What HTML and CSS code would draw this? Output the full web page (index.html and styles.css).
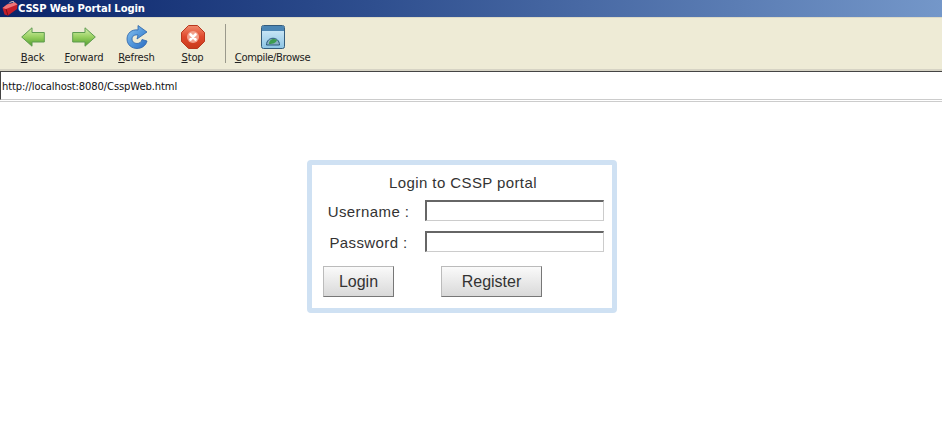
FILE: index.html
```html
<!DOCTYPE html>
<html lang="en">
<head>
<meta charset="utf-8">
<title>CSSP Web Portal Login</title>
<link rel="stylesheet" href="styles.css">
</head>
<body>
<header class="titlebar">
  <svg class="app-icon" width="16" height="16" viewBox="0 0 16 16"><path d="M0.500 7 L5 3.500 L13 1.500 L15.500 3.500 L15 8 L6 14.500 L2.500 13.500 Z" fill="#c41e2a"/><path d="M0.500 7 L5 3.500 L13 1.500 L15.500 3.500 L4 8 Z" fill="#ee7478"/><path d="M4 8 L6 14.500" stroke="#7a0f18" fill="none"/><path d="M7 2.500 L8.500 1 L11.500 .5 L12 2" stroke="#e8c8c0" fill="none"/></svg>
  <span class="title-text">CSSP Web Portal Login</span>
</header>
<nav class="toolbar">
  <div class="tool tool-back">
    <svg class="icon" width="24" height="20" viewBox="0 0 24 20"><defs><linearGradient id="g1" x1="0" y1="0" x2="0" y2="1"><stop offset="0" stop-color="#d8f0b0"/><stop offset=".5" stop-color="#98d060"/><stop offset="1" stop-color="#4f9c2c"/></linearGradient></defs><path d="M.7 10 L11 .8 V5.500 H23.300 V15 H11 V19.200 Z" fill="url(#g1)" stroke="#5f9c50"/></svg>
    <span class="tool-label"><u>B</u>ack</span>
  </div>
  <div class="tool tool-forward">
    <svg class="icon" width="24" height="20" viewBox="0 0 24 20"><path d="M23.300 10 L13 .8 V5.500 H.7 V15 H13 V19.200 Z" fill="url(#g1)" stroke="#5f9c50"/></svg>
    <span class="tool-label"><u>F</u>orward</span>
  </div>
  <div class="tool tool-refresh">
    <svg class="icon" width="22" height="24" viewBox="0 0 22 24"><defs><linearGradient id="g2" x1="0" y1="0" x2="1" y2="1"><stop offset="0" stop-color="#8cc4f0"/><stop offset=".6" stop-color="#4a90d8"/><stop offset="1" stop-color="#2f6cc0"/></linearGradient></defs><path d="M12 5 C6 4 1 8 1 14 C1 20 6 23.500 11 23.500 C16 23.500 20 20.500 21 16 L16 14.500 C15.500 17 13.500 18.500 11 18.500 C8 18.500 6 16.500 6 14 C6 11 8.500 9.500 12 10 L11 14 L21 7 L12 .5 Z" fill="url(#g2)" stroke="#2a62a8" stroke-width=".8"/></svg>
    <span class="tool-label"><u>R</u>efresh</span>
  </div>
  <div class="tool tool-stop">
    <svg class="icon" width="24" height="24" viewBox="0 0 24 24"><defs><linearGradient id="g3" x1="0" y1="0" x2="0" y2="1"><stop offset="0" stop-color="#f08a6c"/><stop offset=".5" stop-color="#e0482c"/><stop offset="1" stop-color="#c83a1c"/></linearGradient></defs><path d="M7.500 .5 H16.500 L23.500 7.500 V16.500 L16.500 23.500 H7.500 L.5 16.500 V7.500 Z" fill="url(#g3)" stroke="#b8381f"/><circle cx="12" cy="12" r="6" fill="#f2a08c"/><path d="M9.500 9.500 L14.500 14.500 M14.500 9.500 L9.500 14.500" stroke="#fff" stroke-width="2.600" stroke-linecap="round"/></svg>
    <span class="tool-label"><u>S</u>top</span>
  </div>
  <div class="separator"></div>
  <div class="tool tool-compile">
    <svg class="icon" width="24" height="24" viewBox="0 0 24 24"><defs><linearGradient id="g4" x1="0" y1="0" x2="0" y2="1"><stop offset="0" stop-color="#d8eefa"/><stop offset="1" stop-color="#8cc4e4"/></linearGradient></defs><rect x=".5" y=".5" width="23" height="23" rx="2" fill="url(#g4)" stroke="#345c7c"/><rect x="1" y="1" width="22" height="5" fill="#4c86b4"/><path d="M5.500 20 C5.500 11 18.500 11 18.500 20 Z" fill="#8ab0c4" stroke="#28587a"/><path d="M8 19 C8 14 13 13 16 15 C15 18 12 19 8 19 Z" fill="#3c9c50"/></svg>
    <span class="tool-label"><u>C</u>ompile/Browse</span>
  </div>
</nav>
<div class="addressbar">http://localhost:8080/CsspWeb.html</div>
<main class="content">
  <form class="login-box">
    <div class="login-title">Login to CSSP portal</div>
    <div class="field-row">
      <label class="field-label">Username :</label>
      <div class="field-input"></div>
    </div>
    <div class="field-row">
      <label class="field-label">Password :</label>
      <div class="field-input"></div>
    </div>
    <div class="button-row">
      <div class="btn btn-login">Login</div>
      <div class="btn btn-register">Register</div>
    </div>
  </form>
</main>
</body>
</html>
```
FILE: styles.css
```css
html, body { margin: 0; padding: 0; background: #fff; overflow: hidden; }
body { width: 942px; height: 430px; font-family: "Liberation Sans", Arial, sans-serif; }

.titlebar {
  height: 17px;
  display: flex;
  align-items: center;
  background: linear-gradient(90deg, #0a246a 0%, #2f4f8f 40%, #7497c9 100%);
  color: #fff;
  font-family: "DejaVu Sans", sans-serif;
  font-weight: bold;
  font-size: 10px;
  letter-spacing: -.1px;
  padding-left: 2px;
}
.app-icon { flex: none; }
.toolbar {
  height: 51px;
  background: #eeebd6;
  border-top: 1px solid #dcdac8;
  border-bottom: 2px solid #d6d3c4;
  display: flex;
}
.tool {
  display: flex;
  flex-direction: column;
  align-items: center;
  padding-top: 7px;
  font-family: "DejaVu Sans", sans-serif;
  font-size: 10px;
  color: #222;
}
.icon { flex: none; height: 24px; }
.tool-back .icon, .tool-forward .icon { height: 20px; margin: 2px 0; }
.tool-label { margin-top: 2px; line-height: 13px; white-space: nowrap; letter-spacing: -.17px; }
.tool-back { width: 65px; }
.tool-forward { width: 38px; }
.tool-refresh { width: 67px; }
.tool-stop { width: 45px; }
.separator { width: 1px; height: 39px; background: #9a998c; margin: 6px 0 0 10px; }
.tool-compile { width: 93px; }
.tool-compile .tool-label { letter-spacing: -.38px; }
.addressbar {
  height: 27px;
  line-height: 29px;
  background: #fff;
  border-top: 1px solid #444;
  border-left: 1px solid #444;
  border-bottom: 1px solid #ccc;
  padding-left: 1px;
  font-family: "DejaVu Sans", sans-serif;
  font-size: 10px;
  letter-spacing: -.12px;
  color: #111;
  position: relative;
}
.addressbar::after {
  content: "";
  position: absolute;
  left: -1px;
  right: 0;
  bottom: -3px;
  height: 1px;
  background: #ccc;
}
.content {
  display: flex;
  padding: 60px 0 0 307px;
}
.login-box {
  width: 310px;
  height: 153px;
  box-sizing: border-box;
  border: 5px solid #cfe1f3;
  border-radius: 4px;
  background: #fff;
  color: #333;
  font-size: 15px;
  letter-spacing: .4px;
}
.login-title { text-align: center; margin-top: 10px; padding-left: 2px; line-height: 16px; }
.field-row { display: flex; height: 21px; margin-top: 10px; }
.login-title + .field-row { margin-top: 9px; }
.field-label { width: 113px; text-align: center; line-height: 23px; }
.field-input {
  width: 179px;
  height: 21px;
  box-sizing: border-box;
  border: 1px solid #ccc;
  border-top: 2px solid #666;
  border-left: 2px solid #666;
}
.button-row { display: flex; margin: 14px 0 0 11px; letter-spacing: 0; }
.btn {
  height: 31px;
  box-sizing: border-box;
  border: 1px solid #bbb;
  border-right-color: #777;
  border-bottom-color: #777;
  background: linear-gradient(#fafafa, #d9d9d9);
  text-align: center;
  line-height: 29px;
  font-size: 16px;
}
.btn-login { width: 71px; }
.btn-register { width: 101px; margin-left: 47px; }
```
